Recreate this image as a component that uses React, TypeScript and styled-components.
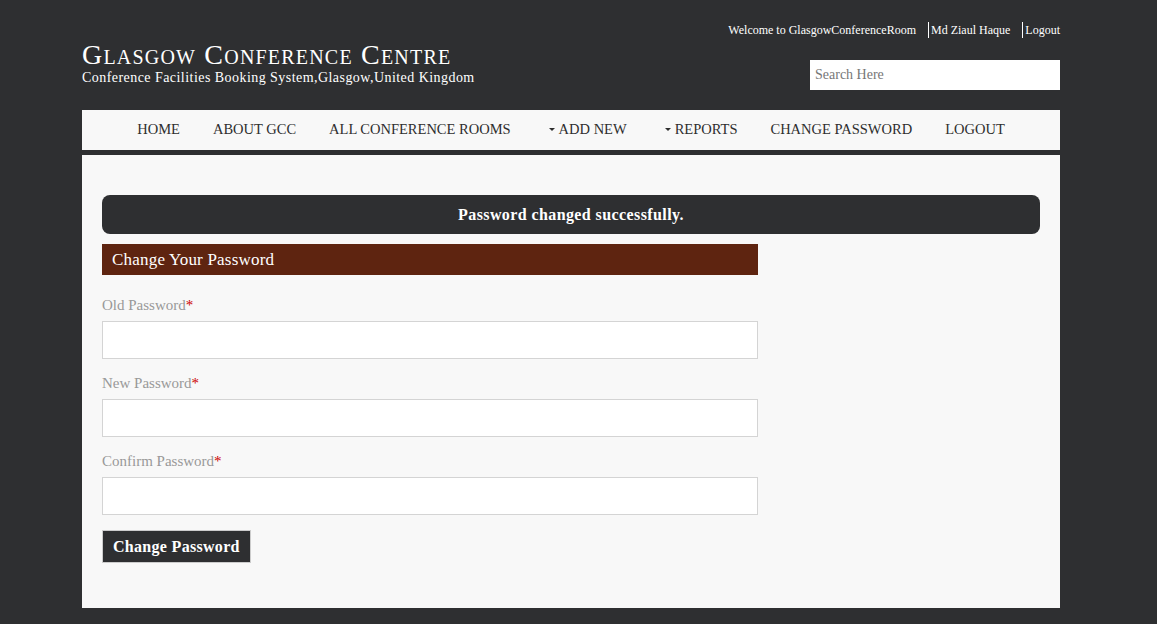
import React from "react";
import styled, { createGlobalStyle } from "styled-components";

const Global = createGlobalStyle`
  html, body { margin: 0; padding: 0; background: #2e2f31; }
  body { font-family: "Liberation Serif", "DejaVu Serif", serif; }
  * { box-sizing: border-box; }
`;

const Page = styled.div`
  width: 978px;
  margin: 0 0 0 82px;
  padding-top: 22px;
`;

const Header = styled.header`
  display: flex;
  justify-content: space-between;
  align-items: flex-start;
  height: 88px;
`;

const Brand = styled.div`
  padding-top: 18px;
  color: #fff;
`;

const Title = styled.h1`
  margin: 0;
  font-size: 28px;
  font-weight: normal;
  font-variant: small-caps;
  line-height: 30px;
  letter-spacing: 1.2px;
`;

const Subtitle = styled.div`
  font-size: 14px;
  line-height: 16px;
  letter-spacing: 0.45px;
`;

const RightCol = styled.div`
  display: flex;
  flex-direction: column;
  align-items: flex-end;
  gap: 22px;
`;

const TopLinks = styled.div`
  display: flex;
  font-size: 12px;
  color: #fff;
  line-height: 16px;
`;

const TopLink = styled.span<{ $sep?: boolean }>`
  margin-left: ${(p) => (p.$sep ? "12px" : "0")};
  padding-left: ${(p) => (p.$sep ? "2px" : "0")};
  border-left: ${(p) => (p.$sep ? "1px solid #fff" : "none")};
`;

const Search = styled.input`
  width: 250px;
  height: 30px;
  border: none;
  padding: 0 5px;
  font-family: inherit;
  font-size: 14px;
  color: #555;
  &::placeholder { color: #777; }
`;

const Nav = styled.nav`
  height: 40px;
  background: #f8f8f8;
  display: flex;
  justify-content: center;
  align-items: center;
  gap: 33px;
  margin-bottom: 5px;
`;

const NavItem = styled.a`
  font-size: 14.5px;
  color: #2e2e2e;
  text-transform: uppercase;
  text-decoration: none;
  display: flex;
  align-items: center;
  gap: 4px;
  padding-bottom: 2px;
  &:nth-child(4), &:nth-child(5) { margin-left: 5px; }
`;

const Caret = styled.span`
  width: 0;
  height: 0;
  border-left: 3px solid transparent;
  border-right: 3px solid transparent;
  border-top: 3px solid #2e2e2e;
`;

const Content = styled.main`
  background: #f8f8f8;
  padding: 40px 20px 45px;
`;

const Alert = styled.div`
  background: #2e2f31;
  color: #fff;
  border-radius: 8px;
  height: 39px;
  display: flex;
  align-items: center;
  justify-content: center;
  font-weight: bold;
  font-size: 16px;
  letter-spacing: 0.4px;
  margin-bottom: 10px;
`;

const Form = styled.form`
  width: 656px;
`;

const FormHead = styled.div`
  background: #5e2410;
  color: #fff;
  height: 31px;
  font-size: 17px;
  letter-spacing: 0.2px;
  padding: 0 10px;
  display: flex;
  align-items: center;
  margin-bottom: 21px;
`;

const Field = styled.div`
  margin-bottom: 15px;
`;

const Label = styled.label`
  display: block;
  color: #999;
  font-size: 15px;
  line-height: 18px;
  margin-bottom: 7px;
`;

const Req = styled.span`
  color: #c00;
`;

const Input = styled.input`
  display: block;
  width: 100%;
  height: 38px;
  border: 1px solid #d4d4d4;
  background: #fff;
`;

const Button = styled.button`
  background: #2e2f31;
  color: #fff;
  border: 1px solid #ccc;
  font-family: inherit;
  font-weight: bold;
  font-size: 16px;
  letter-spacing: 0.3px;
  height: 33px;
  padding: 0 10px;
`;

const navItems: { label: string; caret?: boolean }[] = [
  { label: "Home" },
  { label: "About GCC" },
  { label: "All Conference Rooms" },
  { label: "Add New", caret: true },
  { label: "Reports", caret: true },
  { label: "Change Password" },
  { label: "Logout" },
];

const fields = ["Old Password", "New Password", "Confirm Password"];

export default function App() {
  return (
    <>
      <Global />
      <Page>
        <Header>
          <Brand>
            <Title>Glasgow Conference Centre</Title>
            <Subtitle>Conference Facilities Booking System,Glasgow,United Kingdom</Subtitle>
          </Brand>
          <RightCol>
            <TopLinks>
              <TopLink>Welcome to GlasgowConferenceRoom</TopLink>
              <TopLink $sep>Md Ziaul Haque</TopLink>
              <TopLink $sep>Logout</TopLink>
            </TopLinks>
            <Search placeholder="Search Here" />
          </RightCol>
        </Header>
        <Nav>
          {navItems.map((n) => (
            <NavItem key={n.label} href="#">
              {n.caret && <Caret />}
              {n.label}
            </NavItem>
          ))}
        </Nav>
        <Content>
          <Alert>Password changed successfully.</Alert>
          <Form onSubmit={(e) => e.preventDefault()}>
            <FormHead>Change Your Password</FormHead>
            {fields.map((f) => (
              <Field key={f}>
                <Label>
                  {f}
                  <Req>*</Req>
                </Label>
                <Input type="password" />
              </Field>
            ))}
            <Button type="submit">Change Password</Button>
          </Form>
        </Content>
      </Page>
    </>
  );
}
